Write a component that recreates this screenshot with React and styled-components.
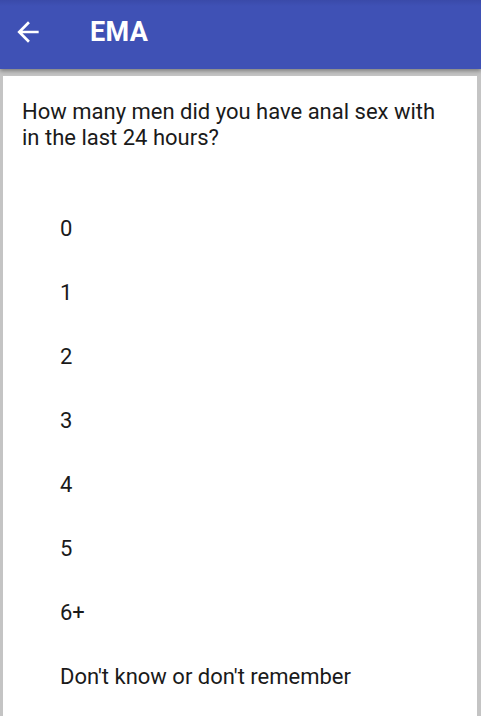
import React from "react";
import styled, { createGlobalStyle } from "styled-components";

const Global = createGlobalStyle`
  html, body { margin: 0; padding: 0; background: #c4c4c4; }
  body { font-family: Roboto, "Noto Sans", sans-serif; }
`;

const Screen = styled.div`
  width: 481px;
  height: 716px;
  display: flex;
  flex-direction: column;
  background: #c4c4c4;
  overflow: hidden;
`;

const AppBar = styled.header`
  height: 69px;
  flex: none;
  background: linear-gradient(#3a4aa9 0px, #3f51b5 6px);
  display: flex;
  align-items: center;
  padding-left: 12px;
  box-shadow: 0 2px 4px rgba(0, 0, 0, 0.35);
  position: relative;
  z-index: 1;
`;

const BackButton = styled.button`
  width: 32px;
  height: 32px;
  padding: 0;
  border: 0;
  background: none;
  display: flex;
  align-items: center;
  justify-content: center;
  margin-right: 46px;
  margin-top: -6px;
`;

const Title = styled.h1`
  margin: -5px 0 0 0;
  color: #fff;
  font-size: 27px;
  font-weight: 700;
  font-family: Roboto, sans-serif;
  letter-spacing: 0.3px;
`;

const Body = styled.main`
  flex: 1;
  padding: 7px 4px 0 3px;
  display: flex;
`;

const Card = styled.section`
  flex: 1;
  background: #fff;
  padding: 23px 20px 0 19px;
`;

const Question = styled.p`
  margin: 0;
  font-size: 22px;
  line-height: 26px;
  color: #1a1a1a;
`;

const Options = styled.ul`
  list-style: none;
  margin: 45px 0 0 0;
  padding: 0 0 0 38px;
`;

const Option = styled.li`
  height: 64px;
  display: flex;
  align-items: center;
  font-size: 22px;
  color: #1a1a1a;
`;

const options = ["0", "1", "2", "3", "4", "5", "6+", "Don't know or don't remember"];

export default function App() {
  return (
    <>
      <Global />
      <Screen>
        <AppBar>
          <BackButton aria-label="Back">
            <svg width="32" height="32" viewBox="0 0 24 24">
              <path d="M20 11H7.83l5.59-5.59L12 4l-8 8 8 8 1.41-1.41L7.83 13H20v-2z" fill="#fff" />
            </svg>
          </BackButton>
          <Title>EMA</Title>
        </AppBar>
        <Body>
          <Card>
            <Question>How many men did you have anal sex with in the last 24 hours?</Question>
            <Options>
              {options.map((o) => (
                <Option key={o}>{o}</Option>
              ))}
            </Options>
          </Card>
        </Body>
      </Screen>
    </>
  );
}
